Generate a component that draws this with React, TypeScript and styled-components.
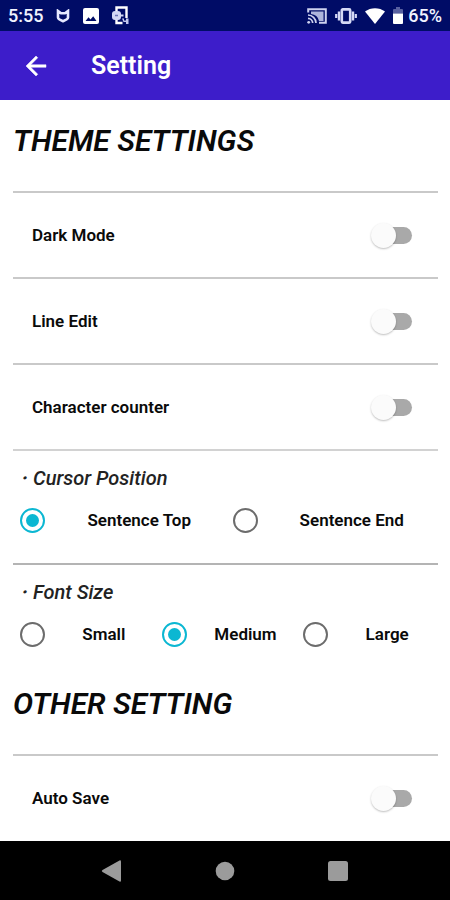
import React, { useState } from "react";
import styled, { createGlobalStyle } from "styled-components";

const GlobalStyle = createGlobalStyle`
  *, *::before, *::after { box-sizing: border-box; }
  body {
    margin: 0;
    background: #fff;
    color: #0a0a0a;
    font-family: Roboto, "Liberation Sans", sans-serif;
  }
  button, input { font: inherit; margin: 0; }
`;

const Page = styled.div`
  display: flex;
  flex-direction: column;
  min-height: 100vh;
`;

const StatusBar = styled.div`
  display: flex;
  align-items: center;
  justify-content: space-between;
  height: 31px;
  padding: 0 8px;
  background: #000c66;
  color: #f1f3ff;
  font-size: 18px;
  font-weight: 500;
`;

const StatusGroup = styled.div<{ $gap: number }>`
  display: flex;
  align-items: center;
  gap: ${(p) => p.$gap}px;
  svg { display: block; }
`;

const BatteryLevel = styled.div`
  display: flex;
  align-items: center;
  gap: 5px;
`;

const AppBar = styled.header`
  display: flex;
  align-items: center;
  gap: 40px;
  height: 69px;
  padding: 0 21px;
  background: #3d1dca;
  color: #fff;
`;

const BackButton = styled.button`
  display: flex;
  padding: 0;
  border: 0;
  background: none;
  color: inherit;
`;

const Title = styled.h1`
  margin: 0;
  font-size: 25px;
  line-height: 32px;
  font-weight: 600;
`;

const Content = styled.main`
  flex: 1;
  padding: 0 12px 0 13px;
`;

const SectionTitle = styled.h2`
  margin: 0;
  padding: 22px 0 32px;
  font-size: 30px;
  line-height: 37px;
  font-weight: 600;
  font-style: italic;
`;

const Row = styled.div`
  display: flex;
  align-items: center;
  justify-content: space-between;
  height: 86px;
  padding: 0 26px 0 19px;
  border-top: 2px solid #c9c9c9;
`;

const RowLabel = styled.label`
  font-size: 17px;
  line-height: 20px;
  font-weight: 600;
`;

const Switch = styled.input`
  appearance: none;
  position: relative;
  width: 36px;
  height: 17px;
  border-radius: 9px;
  background: #a9a9a9;
  &::before {
    content: "";
    position: absolute;
    top: -4px;
    left: -5px;
    width: 25px;
    height: 25px;
    border-radius: 50%;
    background: #fbfbfb;
    box-shadow: 0 1px 2px rgba(0, 0, 0, 0.25);
  }
  &:checked { background: #80deea; }
  &:checked::before { left: 16px; background: #00b8d4; }
`;

const Group = styled.fieldset<{ $space: number }>`
  min-width: 0;
  margin: 0;
  padding: 0 0 ${(p) => p.$space}px;
  border: 0;
`;

const Divider = styled.hr`
  height: 2px;
  margin: 0;
  border: 0;
  background: ${(p) => p.color};
`;

const Legend = styled.legend`
  padding: 14px 0 16px;
  font-size: 20px;
  line-height: 26px;
  font-style: italic;
  font-weight: 500;
  color: #222;
`;

const Options = styled.div`
  display: grid;
  grid-auto-flow: column;
  grid-auto-columns: 1fr;
`;

const Option = styled.label`
  display: flex;
  align-items: center;
  height: 26px;
  padding-left: 7px;
  font-size: 17px;
  line-height: 20px;
  font-weight: 600;
`;

const Radio = styled.input`
  appearance: none;
  flex: none;
  display: grid;
  place-items: center;
  width: 25px;
  height: 25px;
  margin-right: 8px;
  border: 2px solid #6c6c6c;
  border-radius: 50%;
  &:checked { border-color: #0bb7d2; }
  &:checked::before {
    content: "";
    width: 13px;
    height: 13px;
    border-radius: 50%;
    background: #0bb7d2;
  }
`;

const OptionText = styled.span`
  flex: 1;
  text-align: center;
`;

const NavBar = styled.nav`
  display: flex;
  justify-content: center;
  align-items: center;
  gap: 91px;
  height: 59px;
  background: #000;
`;

const NavButton = styled.button`
  display: flex;
  padding: 0;
  border: 0;
  background: none;
  color: #9b9b9b;
`;

function SwitchRow({ id, label }: { id: string; label: string }) {
  return (
    <Row>
      <RowLabel htmlFor={id}>{label}</RowLabel>
      <Switch id={id} type="checkbox" role="switch" />
    </Row>
  );
}

interface RadioGroupProps {
  name: string;
  title: string;
  options: string[];
  initial: string;
  space: number;
}

function RadioGroup({ name, title, options, initial, space }: RadioGroupProps) {
  const [value, setValue] = useState(initial);
  return (
    <Group $space={space}>
      <Legend>・{title}</Legend>
      <Options>
        {options.map((o) => (
          <Option key={o}>
            <Radio type="radio" name={name} checked={value === o} onChange={() => setValue(o)} />
            <OptionText>{o}</OptionText>
          </Option>
        ))}
      </Options>
    </Group>
  );
}

const ShieldIcon = () => (
  <svg width="14" height="14" viewBox="0 0 14 14" fill="none" stroke="#e6e9ff" strokeWidth="2.6">
    <path d="M2 2v6.500c0 1.800 2.800 2.800 5 3.700 2.200-.9 5-1.900 5-3.700V2L9 4.300H5z" />
  </svg>
);

const ImageIcon = () => (
  <svg width="16" height="16" viewBox="0 0 16 16">
    <path
      fill="#fff"
      fillRule="evenodd"
      d="M2 0h12a2 2 0 0 1 2 2v12a2 2 0 0 1-2 2H2a2 2 0 0 1-2-2V2a2 2 0 0 1 2-2zM2.500 13h11L10.200 8.300 7.500 11.500 5.500 9.300z"
    />
  </svg>
);

const DeviceIcon = () => (
  <svg width="17" height="19" viewBox="0 0 17 19">
    <path d="M4.500 5V1.500h10V12M4.500 13v4h6" fill="none" stroke="#fff" strokeWidth="2.400" />
    <rect x="0" y="5" width="9" height="9" rx="3" fill="#d5d9f5" />
    <path d="M3 9.500h3" stroke="#6d76b5" strokeWidth="1.500" />
    <path d="M9 9.500h2.500" stroke="#d5d9f5" strokeWidth="2" />
    <path d="M10 12.500h2v2h2v-2h2.500v5.500H14v-2h-2.500z" fill="#c2c8ee" />
  </svg>
);

const CastIcon = () => (
  <svg width="20" height="16" viewBox="0 0 20 16" fill="none" stroke="#cdd2ef">
    <path d="M4 3.500h12.500v9.500h-4.500A9 9 0 0 0 4 6z" fill="#aeb5dc" stroke="none" />
    <path d="M1.200 4.500V1.200h17.600v13.600H12" strokeWidth="2" />
    <path d="M1 7a8.300 8.300 0 0 1 8 8M1 10.300A5 5 0 0 1 5.700 15" strokeWidth="1.700" />
    <circle cx="1.700" cy="14.300" r="1.400" fill="#cdd2ef" stroke="none" />
  </svg>
);

const VibrateIcon = () => (
  <svg width="22" height="16" viewBox="0 0 22 16" fill="none" stroke="#d5d9f5">
    <rect x="6.800" y="1.400" width="8.400" height="13.200" rx="1" strokeWidth="2.600" />
    <path d="M4 3.500v9M18 3.500v9" strokeWidth="2.400" />
    <path d="M1.200 6v4M20.800 6v4" strokeWidth="2.200" />
  </svg>
);

const WifiIcon = () => (
  <svg width="20" height="16" viewBox="0 0 20 16">
    <path d="M0 3.500C5.500-1 14.500-1 20 3.500L10 16z" fill="#fff" />
  </svg>
);

const BatteryIcon = () => (
  <svg width="10" height="17" viewBox="0 0 10 17">
    <path d="M3 0h4v2h2a1 1 0 0 1 1 1v3.500H0V3a1 1 0 0 1 1-1h2z" fill="#5860a0" />
    <path d="M0 6.500h10V16a1 1 0 0 1-1 1H1a1 1 0 0 1-1-1z" fill="#fff" />
  </svg>
);

const ArrowIcon = () => (
  <svg width="30" height="30" viewBox="0 0 24 24" fill="currentColor" stroke="currentColor" strokeWidth="0.4">
    <path d="M20 11H7.830l5.590-5.590L12 4l-8 8 8 8 1.410-1.410L7.830 13H20v-2z" />
  </svg>
);

export default function App() {
  return (
    <Page>
      <GlobalStyle />
      <StatusBar>
        <StatusGroup $gap={13}>
          <span>5:55</span>
          <ShieldIcon />
          <ImageIcon />
          <DeviceIcon />
        </StatusGroup>
        <StatusGroup $gap={8}>
          <CastIcon />
          <VibrateIcon />
          <WifiIcon />
          <BatteryLevel>
            <BatteryIcon />
            <span>65%</span>
          </BatteryLevel>
        </StatusGroup>
      </StatusBar>
      <AppBar>
        <BackButton type="button" aria-label="Back">
          <ArrowIcon />
        </BackButton>
        <Title>Setting</Title>
      </AppBar>
      <Content>
        <SectionTitle>THEME SETTINGS</SectionTitle>
        <SwitchRow id="dark" label="Dark Mode" />
        <SwitchRow id="line" label="Line Edit" />
        <SwitchRow id="counter" label="Character counter" />
        <Divider color="#d2d2d2" />
        <RadioGroup
          name="cursor"
          title="Cursor Position"
          options={["Sentence Top", "Sentence End"]}
          initial="Sentence Top"
          space={30}
        />
        <Divider color="#b4b4b4" />
        <RadioGroup
          name="size"
          title="Font Size"
          options={["Small", "Medium", "Large"]}
          initial="Medium"
          space={16}
        />
        <SectionTitle>OTHER SETTING</SectionTitle>
        <SwitchRow id="autosave" label="Auto Save" />
      </Content>
      <NavBar>
        <NavButton type="button" aria-label="Back">
          <svg width="22" height="22" viewBox="0 0 22 22" fill="currentColor">
            <path d="M1.500 10L18.500.400Q20 0 20 1.500v19Q20 22 18.500 21.600L1.500 12Q0 11 1.500 10z" />
          </svg>
        </NavButton>
        <NavButton type="button" aria-label="Home">
          <svg width="22" height="22" viewBox="0 0 22 22" fill="currentColor">
            <circle cx="11" cy="11" r="9.300" />
          </svg>
        </NavButton>
        <NavButton type="button" aria-label="Recents">
          <svg width="22" height="22" viewBox="0 0 22 22" fill="currentColor">
            <rect x="1" y="1" width="20" height="20" rx="2.500" />
          </svg>
        </NavButton>
      </NavBar>
    </Page>
  );
}
